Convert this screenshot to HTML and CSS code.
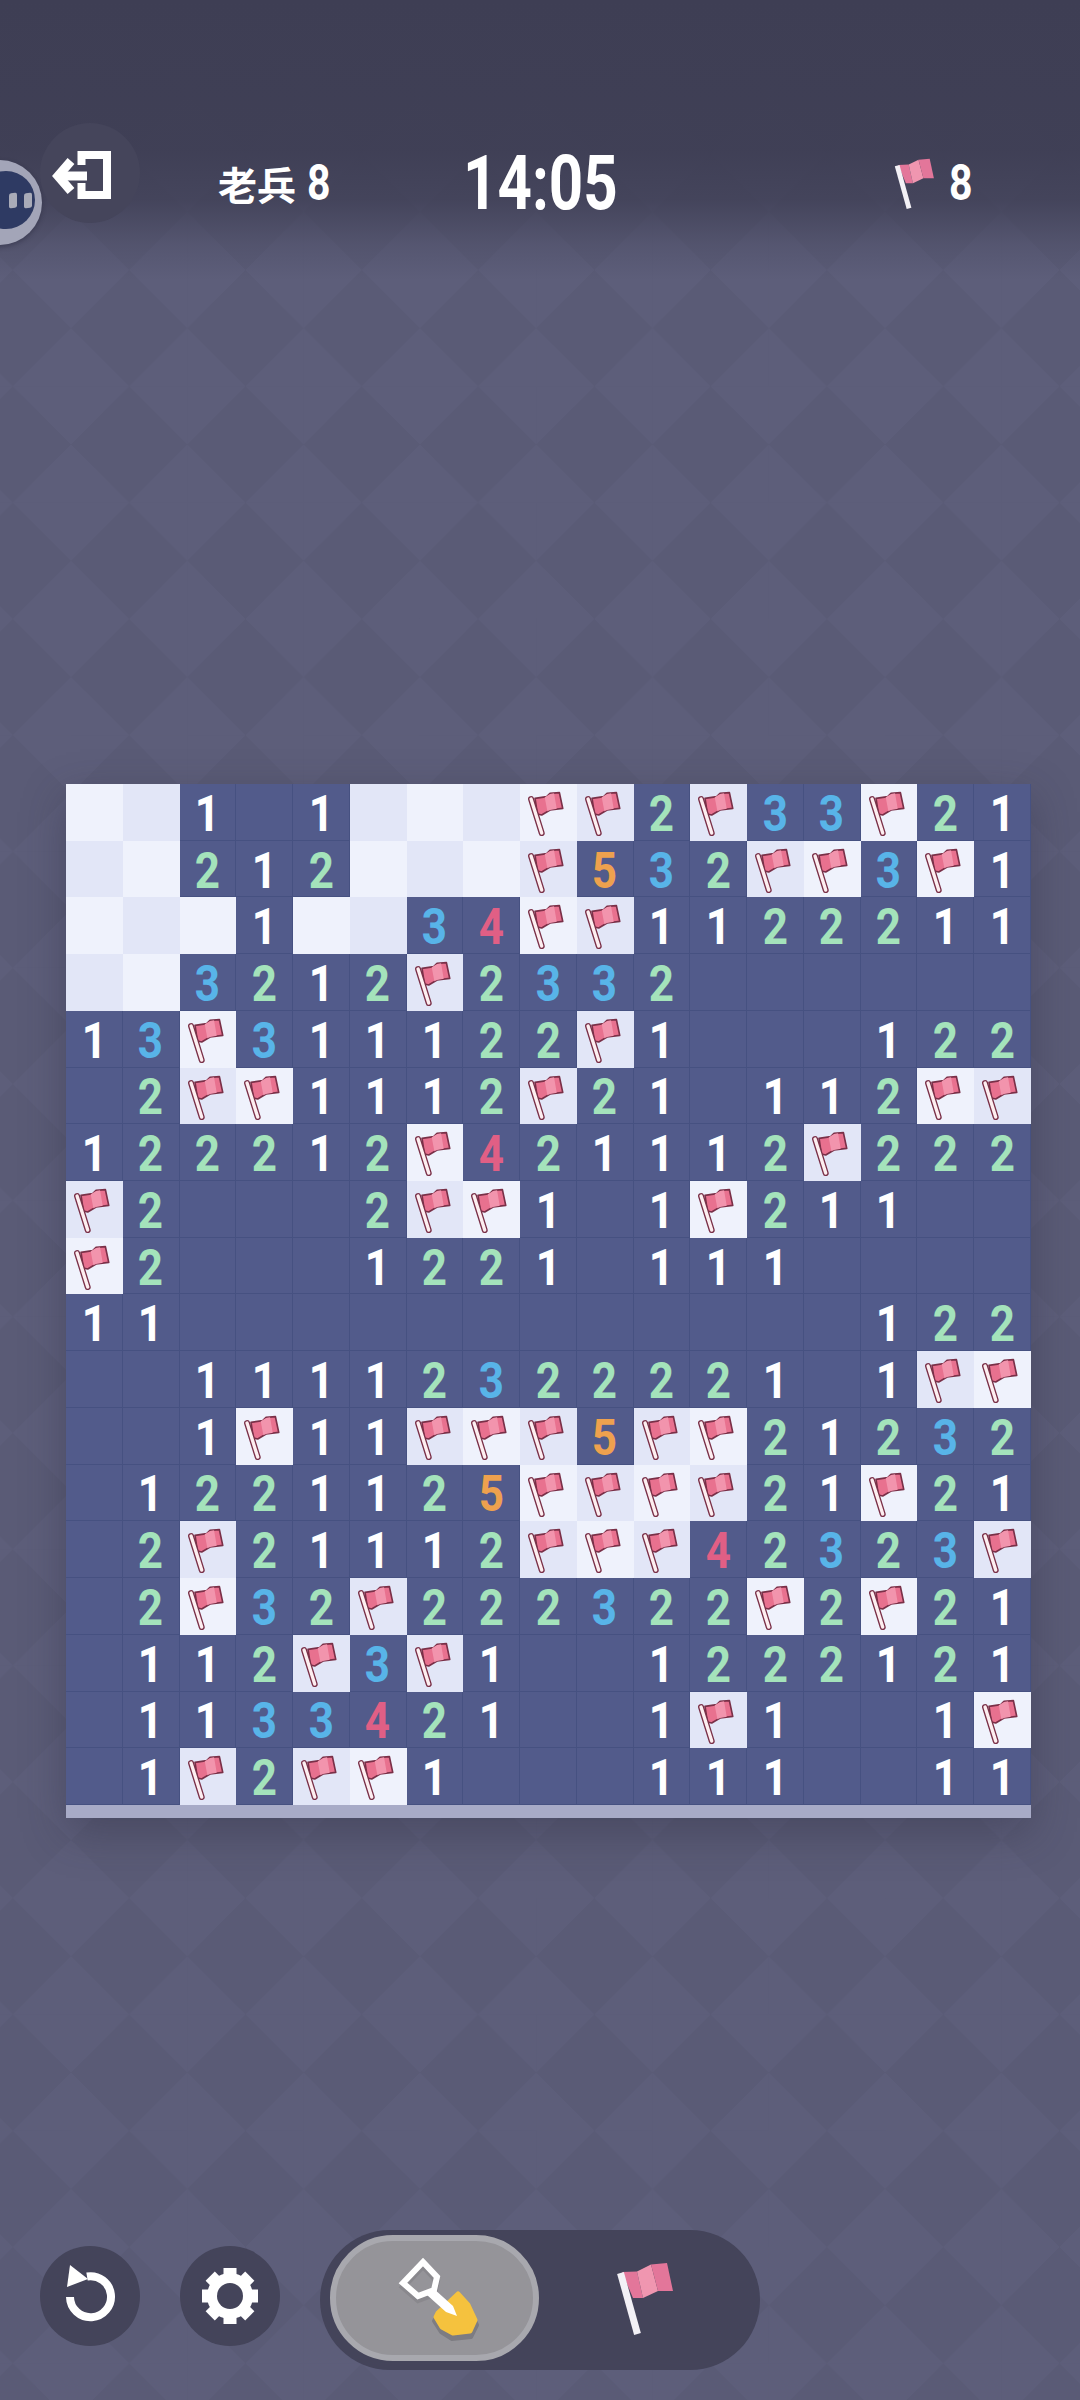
FILE: index.html
```html
<!DOCTYPE html>
<html lang="zh">
<head>
    <meta charset="UTF-8">
    <meta name="viewport" content="width=device-width, initial-scale=1.0">
    <title>扫雷</title>
    <link rel="stylesheet" href="styles.css">
</head>
<body>

<svg class="defs" width="0" height="0">
  <symbol id="flag" viewBox="0 0 170 170">
    <polygon points="45,43 80,38 90,28 118,26 128,73 90,78 65,93 52,90" fill="#e8718f" stroke="#7a3048" stroke-width="5" stroke-linejoin="round"/>
    <polygon points="74,40 90,30 102,28 110,74 90,78 82,82" fill="#f294ad"/>
    <path d="M33 45 L65 147" stroke="#7a3048" stroke-width="18" stroke-linecap="round"/>
    <path d="M33 45 L65 147" stroke="#fdeef0" stroke-width="10" stroke-linecap="round"/>
  </symbol>
  <symbol id="flag-plain" viewBox="0 0 60 75">
    <polygon points="6,11 21,10.5 27,37 17,37" fill="#e3769a"/>
    <polygon points="21,10.5 35,3.5 42,30 27,37" fill="#f096b0"/>
    <polygon points="35,3.5 51,2 57,30 42,30" fill="#e3769a"/>
    <path d="M4.5 12 L21.5 73" stroke="#f3f1f6" stroke-width="7"/>
  </symbol>
</svg>

<div class="pause">
  <div class="pause-inner"><i></i><i></i></div>
</div>

<header class="top">
  <div class="round-btn exit">
    <svg width="100" height="100" viewBox="0 0 100 100">
      <path d="M41.5 42 V32 H67 V72 H41.5 V60" fill="none" stroke="#fff" stroke-width="8"/>
      <path d="M47 53 H22" stroke="#fff" stroke-width="9"/>
      <path d="M31 38 L18 53 L31 68" fill="none" stroke="#fff" stroke-width="9"/>
    </svg>
  </div>
  <div class="rank">老兵 <span class="num">8</span></div>
  <div class="time">14:05</div>
  <div class="flags">
    <svg class="flag-big" viewBox="0 0 60 75"><use href="#flag-plain"/></svg>
    <span class="num">8</span>
  </div>
</header>

<main class="board-wrap">
<div class="board">
<!-- row 0 -->
<span class="cell light"></span><span class="cell dim"></span><span class="cell n1"><b>1</b></span><span class="cell"></span><span class="cell n1"><b>1</b></span><span class="cell dim"></span><span class="cell light"></span><span class="cell dim"></span><span class="cell light"><svg class="flag"><use href="#flag"/></svg></span><span class="cell dim"><svg class="flag"><use href="#flag"/></svg></span><span class="cell n2"><b>2</b></span><span class="cell dim"><svg class="flag"><use href="#flag"/></svg></span><span class="cell n3"><b>3</b></span><span class="cell n3"><b>3</b></span><span class="cell light"><svg class="flag"><use href="#flag"/></svg></span><span class="cell n2"><b>2</b></span><span class="cell n1"><b>1</b></span>
<!-- row 1 -->
<span class="cell dim"></span><span class="cell light"></span><span class="cell n2"><b>2</b></span><span class="cell n1"><b>1</b></span><span class="cell n2"><b>2</b></span><span class="cell light"></span><span class="cell dim"></span><span class="cell light"></span><span class="cell dim"><svg class="flag"><use href="#flag"/></svg></span><span class="cell n5"><b>5</b></span><span class="cell n3"><b>3</b></span><span class="cell n2"><b>2</b></span><span class="cell dim"><svg class="flag"><use href="#flag"/></svg></span><span class="cell light"><svg class="flag"><use href="#flag"/></svg></span><span class="cell n3"><b>3</b></span><span class="cell light"><svg class="flag"><use href="#flag"/></svg></span><span class="cell n1"><b>1</b></span>
<!-- row 2 -->
<span class="cell light"></span><span class="cell dim"></span><span class="cell light"></span><span class="cell n1"><b>1</b></span><span class="cell light"></span><span class="cell dim"></span><span class="cell n3"><b>3</b></span><span class="cell n4"><b>4</b></span><span class="cell light"><svg class="flag"><use href="#flag"/></svg></span><span class="cell dim"><svg class="flag"><use href="#flag"/></svg></span><span class="cell n1"><b>1</b></span><span class="cell n1"><b>1</b></span><span class="cell n2"><b>2</b></span><span class="cell n2"><b>2</b></span><span class="cell n2"><b>2</b></span><span class="cell n1"><b>1</b></span><span class="cell n1"><b>1</b></span>
<!-- row 3 -->
<span class="cell dim"></span><span class="cell light"></span><span class="cell n3"><b>3</b></span><span class="cell n2"><b>2</b></span><span class="cell n1"><b>1</b></span><span class="cell n2"><b>2</b></span><span class="cell dim"><svg class="flag"><use href="#flag"/></svg></span><span class="cell n2"><b>2</b></span><span class="cell n3"><b>3</b></span><span class="cell n3"><b>3</b></span><span class="cell n2"><b>2</b></span><span class="cell"></span><span class="cell"></span><span class="cell"></span><span class="cell"></span><span class="cell"></span><span class="cell"></span>
<!-- row 4 -->
<span class="cell n1"><b>1</b></span><span class="cell n3"><b>3</b></span><span class="cell light"><svg class="flag"><use href="#flag"/></svg></span><span class="cell n3"><b>3</b></span><span class="cell n1"><b>1</b></span><span class="cell n1"><b>1</b></span><span class="cell n1"><b>1</b></span><span class="cell n2"><b>2</b></span><span class="cell n2"><b>2</b></span><span class="cell dim"><svg class="flag"><use href="#flag"/></svg></span><span class="cell n1"><b>1</b></span><span class="cell"></span><span class="cell"></span><span class="cell"></span><span class="cell n1"><b>1</b></span><span class="cell n2"><b>2</b></span><span class="cell n2"><b>2</b></span>
<!-- row 5 -->
<span class="cell"></span><span class="cell n2"><b>2</b></span><span class="cell dim"><svg class="flag"><use href="#flag"/></svg></span><span class="cell light"><svg class="flag"><use href="#flag"/></svg></span><span class="cell n1"><b>1</b></span><span class="cell n1"><b>1</b></span><span class="cell n1"><b>1</b></span><span class="cell n2"><b>2</b></span><span class="cell dim"><svg class="flag"><use href="#flag"/></svg></span><span class="cell n2"><b>2</b></span><span class="cell n1"><b>1</b></span><span class="cell"></span><span class="cell n1"><b>1</b></span><span class="cell n1"><b>1</b></span><span class="cell n2"><b>2</b></span><span class="cell light"><svg class="flag"><use href="#flag"/></svg></span><span class="cell dim"><svg class="flag"><use href="#flag"/></svg></span>
<!-- row 6 -->
<span class="cell n1"><b>1</b></span><span class="cell n2"><b>2</b></span><span class="cell n2"><b>2</b></span><span class="cell n2"><b>2</b></span><span class="cell n1"><b>1</b></span><span class="cell n2"><b>2</b></span><span class="cell light"><svg class="flag"><use href="#flag"/></svg></span><span class="cell n4"><b>4</b></span><span class="cell n2"><b>2</b></span><span class="cell n1"><b>1</b></span><span class="cell n1"><b>1</b></span><span class="cell n1"><b>1</b></span><span class="cell n2"><b>2</b></span><span class="cell dim"><svg class="flag"><use href="#flag"/></svg></span><span class="cell n2"><b>2</b></span><span class="cell n2"><b>2</b></span><span class="cell n2"><b>2</b></span>
<!-- row 7 -->
<span class="cell dim"><svg class="flag"><use href="#flag"/></svg></span><span class="cell n2"><b>2</b></span><span class="cell"></span><span class="cell"></span><span class="cell"></span><span class="cell n2"><b>2</b></span><span class="cell dim"><svg class="flag"><use href="#flag"/></svg></span><span class="cell light"><svg class="flag"><use href="#flag"/></svg></span><span class="cell n1"><b>1</b></span><span class="cell"></span><span class="cell n1"><b>1</b></span><span class="cell light"><svg class="flag"><use href="#flag"/></svg></span><span class="cell n2"><b>2</b></span><span class="cell n1"><b>1</b></span><span class="cell n1"><b>1</b></span><span class="cell"></span><span class="cell"></span>
<!-- row 8 -->
<span class="cell light"><svg class="flag"><use href="#flag"/></svg></span><span class="cell n2"><b>2</b></span><span class="cell"></span><span class="cell"></span><span class="cell"></span><span class="cell n1"><b>1</b></span><span class="cell n2"><b>2</b></span><span class="cell n2"><b>2</b></span><span class="cell n1"><b>1</b></span><span class="cell"></span><span class="cell n1"><b>1</b></span><span class="cell n1"><b>1</b></span><span class="cell n1"><b>1</b></span><span class="cell"></span><span class="cell"></span><span class="cell"></span><span class="cell"></span>
<!-- row 9 -->
<span class="cell n1"><b>1</b></span><span class="cell n1"><b>1</b></span><span class="cell"></span><span class="cell"></span><span class="cell"></span><span class="cell"></span><span class="cell"></span><span class="cell"></span><span class="cell"></span><span class="cell"></span><span class="cell"></span><span class="cell"></span><span class="cell"></span><span class="cell"></span><span class="cell n1"><b>1</b></span><span class="cell n2"><b>2</b></span><span class="cell n2"><b>2</b></span>
<!-- row 10 -->
<span class="cell"></span><span class="cell"></span><span class="cell n1"><b>1</b></span><span class="cell n1"><b>1</b></span><span class="cell n1"><b>1</b></span><span class="cell n1"><b>1</b></span><span class="cell n2"><b>2</b></span><span class="cell n3"><b>3</b></span><span class="cell n2"><b>2</b></span><span class="cell n2"><b>2</b></span><span class="cell n2"><b>2</b></span><span class="cell n2"><b>2</b></span><span class="cell n1"><b>1</b></span><span class="cell"></span><span class="cell n1"><b>1</b></span><span class="cell dim"><svg class="flag"><use href="#flag"/></svg></span><span class="cell light"><svg class="flag"><use href="#flag"/></svg></span>
<!-- row 11 -->
<span class="cell"></span><span class="cell"></span><span class="cell n1"><b>1</b></span><span class="cell light"><svg class="flag"><use href="#flag"/></svg></span><span class="cell n1"><b>1</b></span><span class="cell n1"><b>1</b></span><span class="cell dim"><svg class="flag"><use href="#flag"/></svg></span><span class="cell light"><svg class="flag"><use href="#flag"/></svg></span><span class="cell dim"><svg class="flag"><use href="#flag"/></svg></span><span class="cell n5"><b>5</b></span><span class="cell dim"><svg class="flag"><use href="#flag"/></svg></span><span class="cell light"><svg class="flag"><use href="#flag"/></svg></span><span class="cell n2"><b>2</b></span><span class="cell n1"><b>1</b></span><span class="cell n2"><b>2</b></span><span class="cell n3"><b>3</b></span><span class="cell n2"><b>2</b></span>
<!-- row 12 -->
<span class="cell"></span><span class="cell n1"><b>1</b></span><span class="cell n2"><b>2</b></span><span class="cell n2"><b>2</b></span><span class="cell n1"><b>1</b></span><span class="cell n1"><b>1</b></span><span class="cell n2"><b>2</b></span><span class="cell n5"><b>5</b></span><span class="cell light"><svg class="flag"><use href="#flag"/></svg></span><span class="cell dim"><svg class="flag"><use href="#flag"/></svg></span><span class="cell light"><svg class="flag"><use href="#flag"/></svg></span><span class="cell dim"><svg class="flag"><use href="#flag"/></svg></span><span class="cell n2"><b>2</b></span><span class="cell n1"><b>1</b></span><span class="cell light"><svg class="flag"><use href="#flag"/></svg></span><span class="cell n2"><b>2</b></span><span class="cell n1"><b>1</b></span>
<!-- row 13 -->
<span class="cell"></span><span class="cell n2"><b>2</b></span><span class="cell dim"><svg class="flag"><use href="#flag"/></svg></span><span class="cell n2"><b>2</b></span><span class="cell n1"><b>1</b></span><span class="cell n1"><b>1</b></span><span class="cell n1"><b>1</b></span><span class="cell n2"><b>2</b></span><span class="cell dim"><svg class="flag"><use href="#flag"/></svg></span><span class="cell light"><svg class="flag"><use href="#flag"/></svg></span><span class="cell dim"><svg class="flag"><use href="#flag"/></svg></span><span class="cell n4"><b>4</b></span><span class="cell n2"><b>2</b></span><span class="cell n3"><b>3</b></span><span class="cell n2"><b>2</b></span><span class="cell n3"><b>3</b></span><span class="cell dim"><svg class="flag"><use href="#flag"/></svg></span>
<!-- row 14 -->
<span class="cell"></span><span class="cell n2"><b>2</b></span><span class="cell light"><svg class="flag"><use href="#flag"/></svg></span><span class="cell n3"><b>3</b></span><span class="cell n2"><b>2</b></span><span class="cell dim"><svg class="flag"><use href="#flag"/></svg></span><span class="cell n2"><b>2</b></span><span class="cell n2"><b>2</b></span><span class="cell n2"><b>2</b></span><span class="cell n3"><b>3</b></span><span class="cell n2"><b>2</b></span><span class="cell n2"><b>2</b></span><span class="cell light"><svg class="flag"><use href="#flag"/></svg></span><span class="cell n2"><b>2</b></span><span class="cell light"><svg class="flag"><use href="#flag"/></svg></span><span class="cell n2"><b>2</b></span><span class="cell n1"><b>1</b></span>
<!-- row 15 -->
<span class="cell"></span><span class="cell n1"><b>1</b></span><span class="cell n1"><b>1</b></span><span class="cell n2"><b>2</b></span><span class="cell dim"><svg class="flag"><use href="#flag"/></svg></span><span class="cell n3"><b>3</b></span><span class="cell dim"><svg class="flag"><use href="#flag"/></svg></span><span class="cell n1"><b>1</b></span><span class="cell"></span><span class="cell"></span><span class="cell n1"><b>1</b></span><span class="cell n2"><b>2</b></span><span class="cell n2"><b>2</b></span><span class="cell n2"><b>2</b></span><span class="cell n1"><b>1</b></span><span class="cell n2"><b>2</b></span><span class="cell n1"><b>1</b></span>
<!-- row 16 -->
<span class="cell"></span><span class="cell n1"><b>1</b></span><span class="cell n1"><b>1</b></span><span class="cell n3"><b>3</b></span><span class="cell n3"><b>3</b></span><span class="cell n4"><b>4</b></span><span class="cell n2"><b>2</b></span><span class="cell n1"><b>1</b></span><span class="cell"></span><span class="cell"></span><span class="cell n1"><b>1</b></span><span class="cell dim"><svg class="flag"><use href="#flag"/></svg></span><span class="cell n1"><b>1</b></span><span class="cell"></span><span class="cell"></span><span class="cell n1"><b>1</b></span><span class="cell light"><svg class="flag"><use href="#flag"/></svg></span>
<!-- row 17 -->
<span class="cell"></span><span class="cell n1"><b>1</b></span><span class="cell dim"><svg class="flag"><use href="#flag"/></svg></span><span class="cell n2"><b>2</b></span><span class="cell dim"><svg class="flag"><use href="#flag"/></svg></span><span class="cell light"><svg class="flag"><use href="#flag"/></svg></span><span class="cell n1"><b>1</b></span><span class="cell"></span><span class="cell"></span><span class="cell"></span><span class="cell n1"><b>1</b></span><span class="cell n1"><b>1</b></span><span class="cell n1"><b>1</b></span><span class="cell"></span><span class="cell"></span><span class="cell n1"><b>1</b></span><span class="cell n1"><b>1</b></span>
</div>
</main>

<footer class="tools">
  <div class="round-btn">
    <svg width="100" height="100" viewBox="0 0 100 100">
      <path d="M47 30.5 A20.5 20.5 0 1 1 30 51" fill="none" stroke="#fff" stroke-width="8"/>
      <polygon points="30,19 48,33 27,41" fill="#fff"/>
    </svg>
  </div>
  <div class="round-btn">
    <svg width="100" height="100" viewBox="0 0 100 100">
      <circle cx="50" cy="50" r="18" fill="none" stroke="#fff" stroke-width="10"/>
      <g fill="#fff">
        <rect x="43.5" y="22" width="13" height="56"/>
        <rect x="43.5" y="22" width="13" height="56" transform="rotate(45 50 50)"/>
        <rect x="43.5" y="22" width="13" height="56" transform="rotate(90 50 50)"/>
        <rect x="43.5" y="22" width="13" height="56" transform="rotate(135 50 50)"/>
      </g>
      <circle cx="50" cy="50" r="13" fill="#44445a"/>
    </svg>
  </div>
  <div class="mode-pill">
    <div class="mode-on">
      <svg width="90" height="90" viewBox="0 0 90 90">
        <polygon points="62,42 73,55 81,70 75,82 56,84 45,77 38,66 41,61" fill="#7d7c82" stroke="#7d7c82" stroke-width="4" stroke-linejoin="round"/>
        <polygon points="62,39 72,50 79,65 74,76 57,78 46,72 40,62 42,58" fill="#f5c23e" stroke="#f5c23e" stroke-width="5" stroke-linejoin="round"/>
        <path d="M27 7 L41 22 L38 35 L22 41 L7 28 Z" fill="none" stroke="#7d7c82" stroke-width="6" transform="translate(0 4)" opacity=".5"/>
        <path d="M27 7 L41 22 L38 35 L22 41 L7 28 Z" fill="none" stroke="#fff" stroke-width="6"/>
        <polygon points="31,40 37,33 57,51 61,61 50,57" fill="#fff"/>
      </svg>
    </div>
    <svg class="mode-flag" viewBox="0 0 60 75"><use href="#flag-plain"/></svg>
  </div>
</footer>

</body>
</html>
```

FILE: styles.css
```css
* {
  box-sizing: border-box;
}

html, body {
  margin: 0;
  height: 2400px;
  overflow: hidden;
}

body {
  position: relative;
  font-family: Roboto, "Liberation Sans", sans-serif;
  color: #fff;
  background-color: #5a5b76;
  background-image:
    linear-gradient(#3e3e54 0, rgba(62, 62, 84, .95) 150px, rgba(62, 62, 84, .78) 200px, rgba(62, 62, 84, .25) 245px, rgba(62, 62, 84, 0) 280px),
    linear-gradient(45deg, #5d5e7a 25%, transparent 25%, transparent 75%, #5d5e7a 75%),
    linear-gradient(-45deg, #5d5e7a 25%, transparent 25%, transparent 75%, #5d5e7a 75%);
  background-size: auto, 116.3px 116.3px, 116.3px 116.3px;
  background-position: 0 0, 71px 270px, 71px 270px;
  background-repeat: no-repeat, repeat, repeat;
}

.defs {
  position: absolute;
}

.num {
  display: inline-block;
  font-family: Roboto, "Liberation Sans", sans-serif;
  font-size: 50px;
  font-weight: 700;
  line-height: 1;
  transform: scaleX(.82);
  transform-origin: left center;
}

/* floating pause bubble, half off the screen */
.pause {
  position: absolute;
  left: -43px;
  top: 160px;
  width: 85px;
  height: 85px;
  border-radius: 50%;
  background: #a3a5b8;
  box-shadow: 0 2px 5px rgba(30, 30, 50, .4);
}

.pause-inner {
  display: flex;
  justify-content: flex-end;
  align-items: center;
  gap: 7px;
  width: 58px;
  height: 58px;
  margin: 11px 0 0 20px;
  padding-right: 3px;
  border-radius: 50%;
  background: #2e3a63;
}

.pause-inner i {
  width: 8px;
  height: 15px;
  border-radius: 2px;
  background: #a9abb8;
  transform: skewY(-8deg);
}

.top {
  display: grid;
  grid-template-columns: 178px 245px 431px 1fr;
  align-items: center;
  height: 120px;
  margin-top: 123px;
  padding-left: 40px;
}

body > .top {
  position: relative;
}

.round-btn {
  display: flex;
  width: 100px;
  height: 100px;
  margin-bottom: 8px;
  border-radius: 50%;
  background: #44445a;
}

.exit {
  align-self: start;
  margin-bottom: 0;
  background: #45455b;
}

.rank {
  display: flex;
  align-items: center;
  gap: 11px;
  font-family: Roboto, "Noto Sans CJK SC", sans-serif;
  font-size: 39px;
  font-weight: 700;
  white-space: nowrap;
}

.time {
  font-size: 76px;
  font-weight: 700;
  line-height: 1;
  white-space: nowrap;
  transform: scaleX(.79);
  transform-origin: left center;
}

.flags {
  display: flex;
  align-items: center;
  gap: 13px;
}

.flag-big {
  width: 42px;
  height: 53px;
}

.board-wrap {
  width: 965px;
  margin: 541px 0 0 66px;
  padding-bottom: 13px;
  background: #a8abc7;
  box-shadow: 0 14px 40px rgba(45, 45, 65, .4);
}

.board {
  display: grid;
  grid-template-columns: repeat(17, 1fr);
  grid-auto-rows: 56.72px;
}

.cell {
  display: flex;
  align-items: center;
  justify-content: center;
  padding-top: 4px;
  font-size: 50px;
  line-height: 1;
  background: #525b8b;
  border-right: 1px solid #465181;
  border-bottom: 1px solid #465181;
}

.cell b {
  font-weight: 700;
  transform: scaleX(.88);
}

.cell.light {
  background: #eff2fc;
  border: 0;
  padding: 0;
}

.cell.dim {
  background: #e2e6f7;
  border: 0;
  padding: 0;
}

.flag {
  width: 100%;
  height: 100%;
}

.n1 { color: #fff; }
.n2 { color: #a4e3bb; }
.n3 { color: #58b4e8; }
.n4 { color: #e05f85; }
.n5 { color: #eea14e; }

.tools {
  display: flex;
  align-items: center;
  gap: 40px;
  margin-top: 412px;
  padding-left: 40px;
}

.mode-pill {
  display: flex;
  align-items: flex-start;
  width: 440px;
  height: 140px;
  padding: 5px 0 0 10px;
  border-radius: 70px;
  background: #44445a;
}

.mode-on {
  display: flex;
  align-items: center;
  justify-content: center;
  width: 209px;
  height: 126px;
  padding: 4px 0 0 12px;
  border: 6px solid #a8a8ae;
  border-radius: 63px;
  background: #959499;
}

.mode-flag {
  width: 60px;
  height: 75px;
  margin: 26px 0 0 77px;
}
```
